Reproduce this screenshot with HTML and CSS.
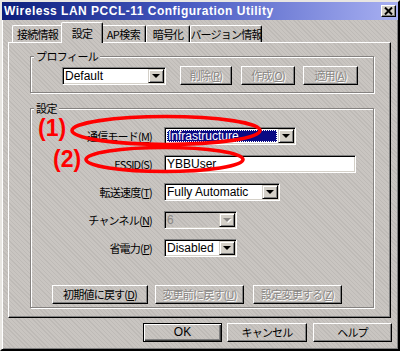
FILE: index.html
```html
<!DOCTYPE html>
<html lang="ja">
<head>
<meta charset="utf-8">
<title>Wireless LAN PCCL-11 Configuration Utility</title>
<link rel="stylesheet" href="styles.css">
</head>
<body>
<div class="window">
  <div class="titlebar">
    <span class="title">Wireless LAN PCCL-11 Configuration Utility</span>
    <span class="close"><svg width="9" height="8" viewBox="0 0 9 8"><path d="M1 0.5 L8 7.5 M8 0.5 L1 7.5" stroke="#000" stroke-width="2" fill="none"/></svg></span>
  </div>
  <div class="tabs">
    <div class="tab t1">接続情報</div>
    <div class="tab t2 sel">設定</div>
    <div class="tab t3">AP検索</div>
    <div class="tab t4">暗号化</div>
    <div class="tab t5">バージョン情報</div>
  </div>
  <div class="panel">
    <fieldset class="group profile">
      <legend>プロフィール</legend>
      <div class="profile-row">
        <div class="combo c-default"><span class="val">Default</span><span class="drop"><i class="tri"></i></span></div>
        <button class="btn dis b-del">削除(<u>R</u>)</button>
        <button class="btn dis b-new">作成(<u>O</u>)</button>
        <button class="btn dis b-apply">適用(<u>A</u>)</button>
      </div>
    </fieldset>
    <fieldset class="group settings">
      <legend>設定</legend>
      <div class="form">
        <span class="lbl">通信モード(<u>M</u>)</span>
        <div class="combo c-mode focus"><span class="val hl"><span class="hl-text">Infrastructure</span></span><span class="drop"><i class="tri"></i></span></div>
        <span class="lbl">ESSID(<u>S</u>)</span>
        <div class="field c-essid"><span class="val">YBBUser</span></div>
        <span class="lbl">転送速度(<u>T</u>)</span>
        <div class="combo c-rate"><span class="val">Fully Automatic</span><span class="drop"><i class="tri"></i></span></div>
        <span class="lbl">チャンネル(<u>N</u>)</span>
        <div class="combo c-ch disabled"><span class="val">6</span><span class="drop"><i class="tri"></i></span></div>
        <span class="lbl">省電力(<u>P</u>)</span>
        <div class="combo c-ps"><span class="val">Disabled</span><span class="drop"><i class="tri"></i></span></div>
      </div>
      <div class="actions">
        <button class="btn b-reset">初期値に戻す(<u>D</u>)</button>
        <button class="btn dis b-undo">変更前に戻す(<u>U</u>)</button>
        <button class="btn dis b-commit">設定変更する(<u>Z</u>)</button>
      </div>
    </fieldset>
  </div>
  <div class="dialog-buttons">
    <button class="btn default b-ok">OK</button>
    <button class="btn b-cancel">キャンセル</button>
    <button class="btn b-help">ヘルプ</button>
  </div>
  <svg class="annot" width="400" height="351" viewBox="0 0 400 351">
    <ellipse cx="166" cy="130.5" rx="94" ry="14" fill="none" stroke="#ff0000" stroke-width="3.6"/>
    <ellipse cx="164.5" cy="159.5" rx="78.5" ry="12" fill="none" stroke="#ff0000" stroke-width="3.6"/>
    <text x="38" y="136" class="mark">(1)</text>
    <text x="53" y="167" class="mark">(2)</text>
  </svg>
</div>
</body>
</html>
```

FILE: styles.css
```css
html, body {
  margin: 0;
  padding: 0;
}
body {
  width: 400px;
  height: 351px;
  overflow: hidden;
  font-family: "Noto Sans CJK JP", "Liberation Sans", sans-serif;
  font-size: 11px;
  color: #000;
}
.window, .group legend {
  background-color: #c9c5c1;
  background-image: repeating-linear-gradient(45deg, rgba(0,0,0,0.055) 0 1px, transparent 1px 3px);
  background-attachment: fixed;
}
.window {
  position: relative;
  box-sizing: border-box;
  width: 400px;
  height: 351px;
  border: 2px solid;
  border-color: #e8e6e2 #000 #000 #e8e6e2;
  box-shadow: inset 1px 1px 0 #fff, inset -1px -1px 0 #808080;
  display: flex;
  flex-direction: column;
}
.titlebar {
  height: 18px;
  flex: none;
  display: flex;
  align-items: center;
  justify-content: space-between;
  background: linear-gradient(to right, #0c1e7c 0%, #4658c0 45%, #a8b0f2 100%);
}
.title {
  padding-left: 2px;
  font-family: "Liberation Sans", sans-serif;
  font-weight: bold;
  font-size: 12px;
  letter-spacing: 0.5px;
  color: #fff;
  white-space: nowrap;
}
.close {
  box-sizing: border-box;
  width: 15px;
  height: 12px;
  margin-right: 2px;
  display: flex;
  align-items: center;
  justify-content: center;
  background: #d4d0c8;
  border: 1px solid;
  border-color: #fff #000 #000 #fff;
  box-shadow: inset -1px -1px 0 #808080;
}
.tabs {
  flex: none;
  height: 20px;
  margin-top: 2px;
  padding-left: 10px;
  display: flex;
  align-items: flex-end;
}
.tab {
  box-sizing: border-box;
  height: 17px;
  border: 1px solid;
  border-bottom: none;
  border-color: #fff #000 transparent #fff;
  border-radius: 2px 2px 0 0;
  box-shadow: inset -1px 0 0 #808080;
  display: flex;
  align-items: center;
  justify-content: center;
  letter-spacing: -0.8px;
  white-space: nowrap;
}
.t1 { width: 51px; }
.t2 { width: 42px; }
.t3 { width: 45px; letter-spacing: -0.5px; }
.t4 { width: 44px; }
.t5 { width: 72px; }
.tab.sel {
  height: 21px;
  margin: 0 -2px -1px -2px;
  position: relative;
  z-index: 1;
  background-color: #c9c5c1;
  background-image: repeating-linear-gradient(45deg, rgba(0,0,0,0.055) 0 1px, transparent 1px 3px);
  background-attachment: fixed;
  align-items: flex-start;
  padding-top: 2px;
}
.panel {
  flex: none;
  box-sizing: border-box;
  width: 383px;
  height: 276px;
  margin-left: 6px;
  border: 1px solid;
  border-color: #fff #000 #000 #fff;
  box-shadow: inset -1px -1px 0 #808080;
}
.group {
  box-sizing: border-box;
  width: 344px;
  margin: 0 0 0 21px;
  padding: 0;
  min-width: 0;
  border: 1px solid #858280;
  box-shadow: inset 1px 1px 0 #fff, 1px 1px 0 #fff;
}
.group legend {
  margin-left: 3px;
  padding: 0 2px;
  line-height: 14px;
  letter-spacing: -0.6px;
}
.profile { margin-top: 6px; }
.settings { margin-top: 8px; }
.profile-row {
  display: flex;
  align-items: center;
  padding: 3px 0 7px 31px;
}
.combo, .field {
  box-sizing: border-box;
  height: 18px;
  border: 1px solid;
  border-color: #808080 #fff #fff #808080;
  box-shadow: inset 1px 1px 0 #000, inset -1px -1px 0 #d4d0c8;
  background: #fff;
  display: flex;
  align-items: center;
  font-family: "Liberation Sans", sans-serif;
  font-size: 12px;
}
.val {
  flex: 1;
  padding-left: 2px;
  white-space: nowrap;
  overflow: hidden;
}
.drop {
  box-sizing: border-box;
  width: 16px;
  height: 14px;
  margin-right: 1px;
  background: #d4d0c8;
  border: 1px solid;
  border-color: #d4d0c8 #000 #000 #d4d0c8;
  box-shadow: inset 1px 1px 0 #fff, inset -1px -1px 0 #808080;
  display: flex;
  align-items: center;
  justify-content: center;
}
.tri {
  width: 0;
  height: 0;
  border-left: 4px solid transparent;
  border-right: 4px solid transparent;
  border-top: 4px solid #000;
}
.c-default { width: 104px; }
.c-mode { width: 132px; }
.c-essid { width: 192px; }
.c-rate { width: 116px; }
.c-ch, .c-ps { width: 73px; }
.combo.disabled {
  background: transparent;
  color: #8a8784;
}
.combo.disabled .tri { border-top-color: #8a8784; filter: drop-shadow(1px 1px 0 #fff); }
.hl {
  align-self: stretch;
  margin: 2px 1px 2px 2px;
  padding: 0;
  display: flex;
  align-items: center;
  background: #0a0a84;
  outline: 1px dotted #fff;
  outline-offset: -1px;
}
.hl-text {
  color: #fff;
  padding-left: 1px;
}
.form {
  display: grid;
  grid-template-columns: 121px auto;
  column-gap: 12px;
  row-gap: 10px;
  justify-items: start;
  align-items: center;
  padding-top: 12px;
}
.lbl {
  justify-self: end;
  white-space: nowrap;
  letter-spacing: -0.8px;
  line-height: 18px;
}
.lbl u, .btn u { text-decoration: underline; }
.actions {
  display: flex;
  margin-top: 28px;
  padding: 0 0 3px 21px;
}
.btn {
  box-sizing: border-box;
  height: 19px;
  padding: 0;
  margin: 0;
  background: transparent;
  border: 1px solid;
  border-color: #fff #000 #000 #fff;
  box-shadow: inset -1px -1px 0 #808080;
  font-family: "Noto Sans CJK JP", "Liberation Sans", sans-serif;
  font-size: 11px;
  letter-spacing: -0.8px;
  line-height: 15px;
  color: #000;
  white-space: nowrap;
}
.btn.dis {
  color: #8a8784;
  text-shadow: 1px 1px 0 #fff;
}
.b-del { width: 52px; margin-left: 14px; }
.b-new { width: 54px; margin-left: 9px; }
.b-apply { width: 55px; margin-left: 8px; }
.b-reset { width: 96px; }
.b-undo { width: 89px; margin-left: 7px; }
.b-commit { width: 89px; margin-left: 9px; }
.dialog-buttons {
  flex: none;
  display: flex;
  justify-content: flex-end;
  margin-top: 5px;
  padding-right: 6px;
}
.b-ok { width: 79px; font-family: "Liberation Sans", sans-serif; font-size: 12px; letter-spacing: 0; }
.b-cancel { width: 80px; margin-left: 5px; }
.b-help { width: 79px; margin-left: 6px; }
.btn.default {
  border-color: #000;
  box-shadow: inset 1px 1px 0 #fff, inset -1px -1px 0 #404040, inset -2px -2px 0 #808080;
}
.annot {
  position: absolute;
  left: -2px;
  top: -2px;
  pointer-events: none;
}
.mark {
  font-family: "Liberation Sans", sans-serif;
  font-weight: bold;
  font-size: 23px;
  fill: #ff0000;
}
```
